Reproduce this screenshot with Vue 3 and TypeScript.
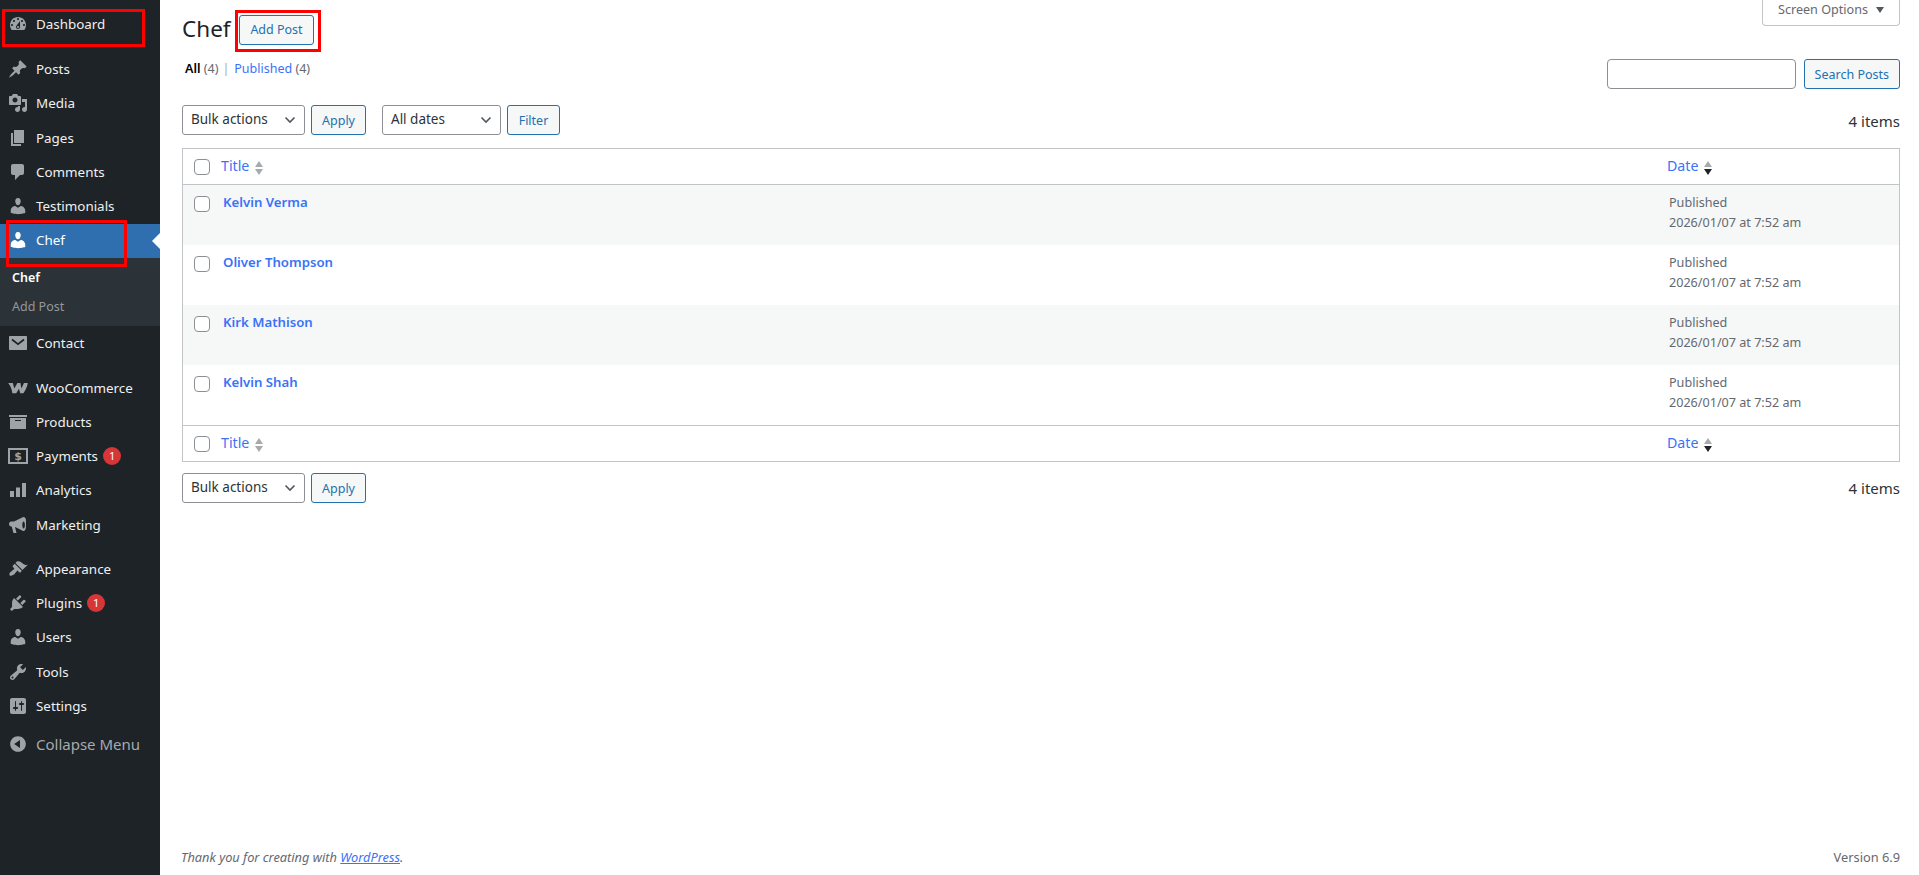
<template>
  <div class="page">
    <aside class="sidebar">
      <ul class="menu">
        <template v-for="item in menu" :key="item.label">
          <li class="menu-item" :class="{ active: item.active, gap: item.gap }">
            <svg class="menu-icon" viewBox="0 0 20 20">
              <path :d="item.icon" />
              <path v-if="item.extra" class="cut" :d="item.extra" />
              <text v-if="item.label === 'Payments'" x="10" y="14" class="dollar">$</text>
            </svg>
            <span class="menu-label">{{ item.label }}</span>
            <span v-if="item.badge" class="badge">{{ item.badge }}</span>
          </li>
          <li v-if="item.active" class="submenu">
            <a class="sub-current">Chef</a>
            <a class="sub-link">Add Post</a>
          </li>
        </template>
        <li class="collapse">
          <svg class="menu-icon" viewBox="0 0 20 20">
            <path d="M10 2.16c4.33 0 7.84 3.51 7.84 7.84s-3.51 7.84-7.84 7.84S2.16 14.33 2.16 10 5.71 2.16 10 2.16zm2 11.72V6.12L6.18 9.97z" />
          </svg>
          <span>Collapse Menu</span>
        </li>
      </ul>
    </aside>

    <main class="content">
      <div class="screen-options">
        Screen Options
        <span class="down-tri"></span>
      </div>

      <div class="heading">
        <h1>Chef</h1>
        <button class="btn add-btn">Add Post</button>
      </div>

      <div class="filter-row">
        <div class="views">
          <strong>All</strong> <span class="count">(4)</span>
          <span class="sep">|</span>
          <a>Published</a> <span class="count">(4)</span>
        </div>
        <div class="search">
          <div class="search-input"></div>
          <button class="btn">Search Posts</button>
        </div>
      </div>

      <div class="tablenav top-nav">
        <div class="fake-select bulk">
          <span>Bulk actions</span>
          <svg class="chev" viewBox="0 0 12 8"><path d="M1.5 1.5 6 6l4.5-4.5" /></svg>
        </div>
        <button class="btn apply-btn">Apply</button>
        <div class="fake-select dates">
          <span>All dates</span>
          <svg class="chev" viewBox="0 0 12 8"><path d="M1.5 1.5 6 6l4.5-4.5" /></svg>
        </div>
        <button class="btn filter-btn">Filter</button>
        <span class="items">4 items</span>
      </div>

      <table class="posts">
        <thead>
          <tr>
            <th class="cb"><span class="checkbox"></span></th>
            <th class="title-col">
              <a>Title</a>
              <span class="sorter"><i class="up"></i><i class="dn"></i></span>
            </th>
            <th class="date-col">
              <a>Date</a>
              <span class="sorter"><i class="up"></i><i class="dn on"></i></span>
            </th>
          </tr>
        </thead>
        <tbody>
          <tr v-for="(post, i) in posts" :key="post" :class="{ alt: i % 2 === 0 }">
            <td class="cb"><span class="checkbox"></span></td>
            <td class="post-title"><a>{{ post }}</a></td>
            <td class="post-date">Published<br />2026/01/07 at 7:52 am</td>
          </tr>
        </tbody>
        <tfoot>
          <tr>
            <th class="cb"><span class="checkbox"></span></th>
            <th class="title-col">
              <a>Title</a>
              <span class="sorter"><i class="up"></i><i class="dn"></i></span>
            </th>
            <th class="date-col">
              <a>Date</a>
              <span class="sorter"><i class="up"></i><i class="dn on"></i></span>
            </th>
          </tr>
        </tfoot>
      </table>

      <div class="tablenav bottom-nav">
        <div class="fake-select bulk">
          <span>Bulk actions</span>
          <svg class="chev" viewBox="0 0 12 8"><path d="M1.5 1.5 6 6l4.5-4.5" /></svg>
        </div>
        <button class="btn apply-btn">Apply</button>
        <span class="items">4 items</span>
      </div>

      <footer class="footer">
        <em>Thank you for creating with <a>WordPress</a>.</em>
        <span>Version 6.9</span>
      </footer>
    </main>

    <div class="mark mark-dash"></div>
    <div class="mark mark-chef"></div>
    <div class="mark mark-add"></div>
  </div>
</template>

<script setup lang="ts">
interface MenuItem {
  label: string;
  icon: string;
  extra?: string;
  badge?: number;
  active?: boolean;
  gap?: boolean;
}

const person =
  "M10 9.25c-2.27 0-2.73-3.44-2.73-3.44C7 4.02 7.82 2 9.97 2c2.16 0 2.98 2.02 2.71 3.81 0 0-.41 3.44-2.68 3.44zm0 2.57L12.72 10c2.39 0 4.52 2.33 4.52 4.53v2.49s-3.65 1.13-7.24 1.13c-3.65 0-7.24-1.13-7.24-1.13v-2.49c0-2.25 1.94-4.48 4.47-4.48z";

const menu: MenuItem[] = [
  {
    label: "Dashboard",
    icon: "M3.76 16h12.48c1.1-1.37 1.76-3.11 1.76-5 0-4.42-3.58-8-8-8s-8 3.58-8 8c0 1.89.66 3.63 1.76 5zM10 4c.55 0 1 .45 1 1s-.45 1-1 1-1-.45-1-1 .45-1 1-1zM6 6c.55 0 1 .45 1 1s-.45 1-1 1-1-.45-1-1 .45-1 1-1zm8 0c.55 0 1 .45 1 1s-.45 1-1 1-1-.45-1-1 .45-1 1-1zm-5.37 5.55L12 7v6c0 1.1-.9 2-2 2s-2-.9-2-2c0-.57.24-1.08.63-1.45zM4 10c.55 0 1 .45 1 1s-.45 1-1 1-1-.45-1-1 .45-1 1-1zm12 0c.55 0 1 .45 1 1s-.45 1-1 1-1-.45-1-1 .45-1 1-1zm-5 3c0-.55-.45-1-1-1s-1 .45-1 1 .45 1 1 1 1-.45 1-1z",
  },
  {
    label: "Posts",
    gap: true,
    icon: "M10.44 3.02l1.82-1.82 6.36 6.35-1.83 1.82c-1.05-.68-2.48-.57-3.41.36l-.75.75c-.92.93-1.04 2.35-.35 3.41l-1.83 1.82-2.41-2.41-2.8 2.79c-.42.42-3.38 2.71-3.8 2.29s1.86-3.39 2.28-3.81l2.79-2.79L4.1 9.36l1.83-1.82c1.05.69 2.48.57 3.4-.36l.75-.75c.93-.92 1.05-2.35.36-3.41z",
  },
  {
    label: "Media",
    icon: "M13 11V4c0-.55-.45-1-1-1h-1.67L9 1H5L3.67 3H2c-.55 0-1 .45-1 1v7c0 .55.45 1 1 1h10c.55 0 1-.45 1-1zM7 4.5c1.38 0 2.5 1.12 2.5 2.5S8.38 9.5 7 9.5 4.5 8.38 4.5 7 5.62 4.5 7 4.5zM14 6h5v10.5c0 1.38-1.12 2.5-2.5 2.5S14 17.88 14 16.5s1.12-2.5 2.5-2.5c.17 0 .34.02.5.05V9h-3V6zm-4 8.05V13h2v3.5c0 1.38-1.12 2.5-2.5 2.5S7 17.88 7 16.5 8.12 14 9.5 14c.17 0 .34.02.5.05z",
  },
  { label: "Pages", icon: "M6 15V2h10v13H6zm-1 1h8v2H3V5h2v11z" },
  {
    label: "Comments",
    icon: "M5 2h9c1.1 0 2 .9 2 2v7c0 1.1-.9 2-2 2h-2l-5 5v-5H5c-1.1 0-2-.9-2-2V4c0-1.1.9-2 2-2z",
  },
  { label: "Testimonials", icon: person },
  { label: "Chef", icon: person, active: true },
  {
    label: "Contact",
    icon: "M2 3h16c.55 0 1 .45 1 1v12c0 .55-.45 1-1 1H2c-.55 0-1-.45-1-1V4c0-.55.45-1 1-1z",
    extra: "M4 6.5l6 4.6 6-4.6",
  },
  {
    label: "WooCommerce",
    gap: true,
    icon: "M.2 5h4.6l1.5 5.6L9.4 5h3l1 5.6L16 5h3.8c-.5 4-2.8 8.2-4.4 10.2h-3.2l-1.2-4.4-2.8 4.4H4.4C4 11.5 2.4 7.5.2 5z",
  },
  { label: "Products", icon: "M19 3v2H1V3h18zM2 6h16v11H2V6zm11 3V8H7v1h6z" },
  {
    label: "Payments",
    badge: 1,
    icon: "M0 2h20v16H0V2zm2 2v12h16V4H2z",
  },
  { label: "Analytics", icon: "M2 11h4v6H2zM8 7.5h4V17H8zM14 3h4v14h-4z" },
  {
    label: "Marketing",
    icon: "M18 5.5C18 3.5 16.9 2 15.6 2c-.5 0-1 .2-1.4.6L6 6.6H3.2C2 6.6 1 7.7 1 9s1 2.4 2.2 2.4h.5L5.5 18h3L7 12l7.2 3.4c.4.4.9.6 1.4.6 1.3 0 2.4-1.9 2.4-4.5V5.5zm-2.4 7.9c-.7 0-1.3-1.4-1.3-3.4s.6-3.4 1.3-3.4 1.3 1.4 1.3 3.4-.6 3.4-1.3 3.4z",
  },
  {
    label: "Appearance",
    gap: true,
    icon: "M14.48 11.06L7.41 3.99l1.5-1.5c.5-.56 2.3-.47 3.51.32 1.21.8 1.43 1.28 2.91 2.1 1.18.64 2.45 1.26 4.45.85zm-.71.71L6.7 4.7 4.93 6.47c-.39.39-.39 1.02 0 1.41l1.06 1.06c.39.39.39 1.03 0 1.42-.6.6-1.43 1.11-2.21 1.69-.35.26-.7.53-1.01.84C1.43 13.23 1 15.64 1.75 16.39c.75.75 3.16.32 4.5-1.03.31-.31.58-.66.84-1.01.58-.78 1.09-1.61 1.69-2.21.39-.39 1.03-.39 1.42 0l1.06 1.06c.39.39 1.02.39 1.41 0z",
  },
  {
    label: "Plugins",
    badge: 1,
    icon: "M13.11 4.36L9.87 7.6 8 5.73l3.24-3.24c.35-.34 1.05-.2 1.56.32.52.51.66 1.21.31 1.55zm-8 1.77l.91-1.12 9.01 9.01-1.19.84c-.71.71-2.63 1.16-3.82 1.16H6.14L4.9 17.26c-.59.59-1.54.59-2.12 0-.59-.58-.59-1.53 0-2.12l1.24-1.24v-3.88c0-1.13.4-3.19 1.09-3.89zm7.26 3.97l3.24-3.24c.34-.35 1.04-.21 1.55.31.52.51.66 1.21.31 1.55l-3.24 3.25z",
  },
  { label: "Users", icon: person },
  {
    label: "Tools",
    icon: "M16.68 9.77c-1.34 1.34-3.3 1.67-4.95.99l-5.41 6.52c-.99.99-2.59.99-3.58 0s-.99-2.59 0-3.57l6.52-5.42c-.68-1.65-.35-3.61.99-4.95 1.28-1.28 3.12-1.62 4.72-1.06l-2.89 2.89 2.82 2.82 2.86-2.87c.53 1.58.18 3.39-1.08 4.65zM3.81 16.21c.4.39 1.04.39 1.43 0 .4-.4.4-1.04 0-1.43-.39-.4-1.03-.4-1.43 0-.39.39-.39 1.03 0 1.43z",
  },
  {
    label: "Settings",
    icon: "M18 16V4c0-1.1-.9-2-2-2H4c-1.1 0-2 .9-2 2v12c0 1.1.9 2 2 2h12c1.1 0 2-.9 2-2zM8 11h1c.55 0 1 .45 1 1s-.45 1-1 1H8v1.5c0 .28-.22.5-.5.5s-.5-.22-.5-.5V13H6c-.55 0-1-.45-1-1s.45-1 1-1h1V5.5c0-.28.22-.5.5-.5s.5.22.5.5V11zm5-2h-1c-.55 0-1-.45-1-1s.45-1 1-1h1V5.5c0-.28.22-.5.5-.5s.5.22.5.5V7h1c.55 0 1 .45 1 1s-.45 1-1 1h-1v5.5c0 .28-.22.5-.5.5s-.5-.22-.5-.5V9z",
  },
];

const posts: string[] = ["Kelvin Verma", "Oliver Thompson", "Kirk Mathison", "Kelvin Shah"];
</script>

<style>
html,
body {
  margin: 0;
  background: #fff;
}
</style>

<style scoped>
.page {
  position: relative;
  display: flex;
  height: 875px;
  overflow: hidden;
  font-family: "Noto Sans", sans-serif;
  font-size: 13px;
  color: #3c434a;
}

.sidebar {
  width: 160px;
  flex-shrink: 0;
  background: #1d2327;
}

.menu {
  list-style: none;
  margin: 0;
  padding: 7px 0 0;
}

.menu-item {
  position: relative;
  display: flex;
  align-items: center;
  height: 34.25px;
  color: #f0f0f1;
  font-size: 13.4px;
}

.menu-item.gap {
  margin-top: 10px;
}

.menu-item:nth-child(2) {
  margin-top: 10.75px;
}

.menu-icon {
  width: 20px;
  height: 20px;
  margin: 0 8px 0 8px;
  fill: #9ea3a8;
  flex-shrink: 0;
}

.menu-icon .cut {
  fill: none;
  stroke: #1d2327;
  stroke-width: 1.8;
}

.dollar {
  font-size: 11px;
  font-weight: 700;
  font-family: "DejaVu Sans", sans-serif;
  text-anchor: middle;
}

.menu-item.active {
  box-sizing: border-box;
  height: 33.75px;
  margin-top: 0.75px;
  padding-bottom: 2px;
  background: #2f6fb0;
  color: #fff;
}

.menu-item.active .menu-icon {
  fill: #fff;
}

.menu-item.active::after {
  content: "";
  position: absolute;
  right: 0;
  top: 50%;
  margin-top: -8px;
  border: 8px solid transparent;
  border-right-color: #fff;
  border-left: 0;
}

.badge {
  width: 18px;
  height: 18px;
  margin-left: 5px;
  border-radius: 50%;
  background: #d63638;
  color: #fff;
  font-size: 11px;
  line-height: 18px;
  text-align: center;
}

.submenu {
  display: flex;
  flex-direction: column;
  height: 68.5px;
  box-sizing: border-box;
  padding-top: 8px;
  background: #2c3338;
  font-size: 12.5px;
}

.submenu a {
  padding-left: 12px;
  height: 29px;
  line-height: 24px;
}

.sub-current {
  color: #fff;
  font-weight: 600;
}

.sub-link {
  color: #c3c4c7b3;
}

.collapse {
  display: flex;
  align-items: center;
  margin-top: 4px;
  height: 34px;
  color: #a7aaad;
  font-size: 15px;
}

.content {
  position: relative;
  flex: 1;
  display: flex;
  flex-direction: column;
  padding: 0 19px 0 22px;
  min-width: 0;
}

.screen-options {
  position: absolute;
  top: 0;
  right: 19px;
  display: flex;
  align-items: center;
  justify-content: center;
  gap: 8px;
  width: 138px;
  height: 26px;
  box-sizing: border-box;
  padding-bottom: 6px;
  border: 1px solid #c3c4c7;
  border-top: 0;
  border-radius: 0 0 4px 4px;
  color: #646970;
  font-size: 12.6px;
}

.down-tri {
  border: 4px solid transparent;
  border-top: 6px solid #50575e;
  border-bottom: 0;
}

.heading {
  display: flex;
  align-items: center;
  height: 30px;
  margin-top: 15px;
}

h1 {
  width: 57px;
  margin: 0;
  padding-bottom: 2px;
  font-size: 22.5px;
  font-weight: 400;
  color: #1d2327;
  line-height: 28px;
}

.btn {
  height: 30px;
  box-sizing: border-box;
  padding: 0 10px;
  border: 1px solid #2271b1;
  border-radius: 3px;
  background: #f6f7f7;
  color: #2271b1;
  font-family: inherit;
  font-size: 12.5px;
}

.add-btn {
  width: 75px;
  padding: 0 0 2px;
}

.filter-row {
  display: flex;
  justify-content: space-between;
  height: 30px;
  margin-top: 14px;
}

.views {
  padding: 1px 0 0 3px;
  font-size: 12.5px;
  line-height: 18px;
  color: #646970;
}

.views strong {
  color: #000;
  font-weight: 600;
}

.views a {
  color: #3a72f8;
}

.sep {
  margin: 0 5px 0 4px;
  color: #a7aaad;
}

.search {
  display: flex;
  gap: 8px;
}

.search-input {
  width: 189px;
  height: 30px;
  box-sizing: border-box;
  border: 1px solid #8c8f94;
  border-radius: 4px;
  background: #fff;
}

.tablenav {
  display: flex;
  align-items: center;
  height: 30px;
}

.top-nav {
  margin-top: 16px;
}

.bottom-nav {
  margin-top: 11px;
}

.fake-select {
  display: flex;
  align-items: center;
  justify-content: space-between;
  height: 30px;
  box-sizing: border-box;
  padding: 0 8px;
  border: 1px solid #8c8f94;
  border-radius: 3px;
  background: #fff;
  color: #2c3338;
  font-size: 13.5px;
}

.fake-select span {
  margin-top: -2px;
}

.bulk {
  width: 123px;
}

.dates {
  width: 119px;
  margin-left: 16px;
}

.chev {
  width: 12px;
  height: 8px;
  fill: none;
  stroke: #50575e;
  stroke-width: 1.6;
}

.apply-btn {
  width: 55px;
  padding: 0;
  margin-left: 6px;
}

.filter-btn {
  width: 53px;
  padding: 0;
  margin-left: 6px;
}

.items {
  margin-left: auto;
  font-size: 15px;
  color: #2c3338;
}

.top-nav .items {
  padding-top: 2px;
}

.posts {
  width: 100%;
  margin-top: 13px;
  border-collapse: separate;
  border-spacing: 0;
  border: 1px solid #c3c4c7;
  table-layout: fixed;
  background: #fff;
}

.posts a {
  color: #3a72f8;
}

th {
  height: 35px;
  padding: 0;
  font-weight: 400;
  text-align: left;
  font-size: 14.2px;
}

th a {
  position: relative;
  top: -1px;
}

thead th {
  border-bottom: 1px solid #c3c4c7;
}

tfoot th {
  border-top: 1px solid #c3c4c7;
}

.cb {
  width: 38px;
  padding: 0 0 0 11px;
  box-sizing: border-box;
}

th.cb {
  vertical-align: middle;
}

.checkbox {
  display: block;
  width: 16px;
  height: 16px;
  box-sizing: border-box;
  border: 1px solid #8c8f94;
  border-radius: 4px;
  background: #fff;
}

td {
  height: 60px;
  padding: 0;
  box-sizing: border-box;
  vertical-align: top;
}

td.cb {
  padding-top: 11px;
}

.post-title {
  padding: 8px 0 0 2px;
  font-weight: 600;
  font-size: 13.2px;
}

.post-date {
  padding: 8px 0 0 2px;
  font-size: 12.6px;
  line-height: 20px;
  color: #646970;
}

.date-col {
  width: 232px;
}

.alt {
  background: #f6f7f7;
}

.sorter {
  display: inline-flex;
  flex-direction: column;
  gap: 2px;
  margin-left: 6px;
  vertical-align: middle;
}

.sorter i {
  display: block;
  border-left: 4px solid transparent;
  border-right: 4px solid transparent;
}

.sorter .up {
  border-bottom: 6px solid #a7aaad;
}

.sorter .dn {
  border-top: 6px solid #a7aaad;
}

.sorter .dn.on {
  border-top-color: #1d2327;
}

.footer {
  display: flex;
  justify-content: space-between;
  margin-top: auto;
  padding: 0 0 9px;
  margin-left: -1px;
  font-size: 12.8px;
  line-height: 18px;
  color: #646970;
}

.footer a {
  color: #3a72f8;
  text-decoration: underline;
}

.mark {
  position: absolute;
  box-sizing: border-box;
  border: 3px solid #f00;
  pointer-events: none;
}

.mark-dash {
  left: 2px;
  top: 9px;
  width: 143px;
  height: 38px;
}

.mark-chef {
  left: 6px;
  top: 220px;
  width: 121px;
  height: 47px;
}

.mark-add {
  left: 235px;
  top: 10px;
  width: 86px;
  height: 42px;
}
</style>
